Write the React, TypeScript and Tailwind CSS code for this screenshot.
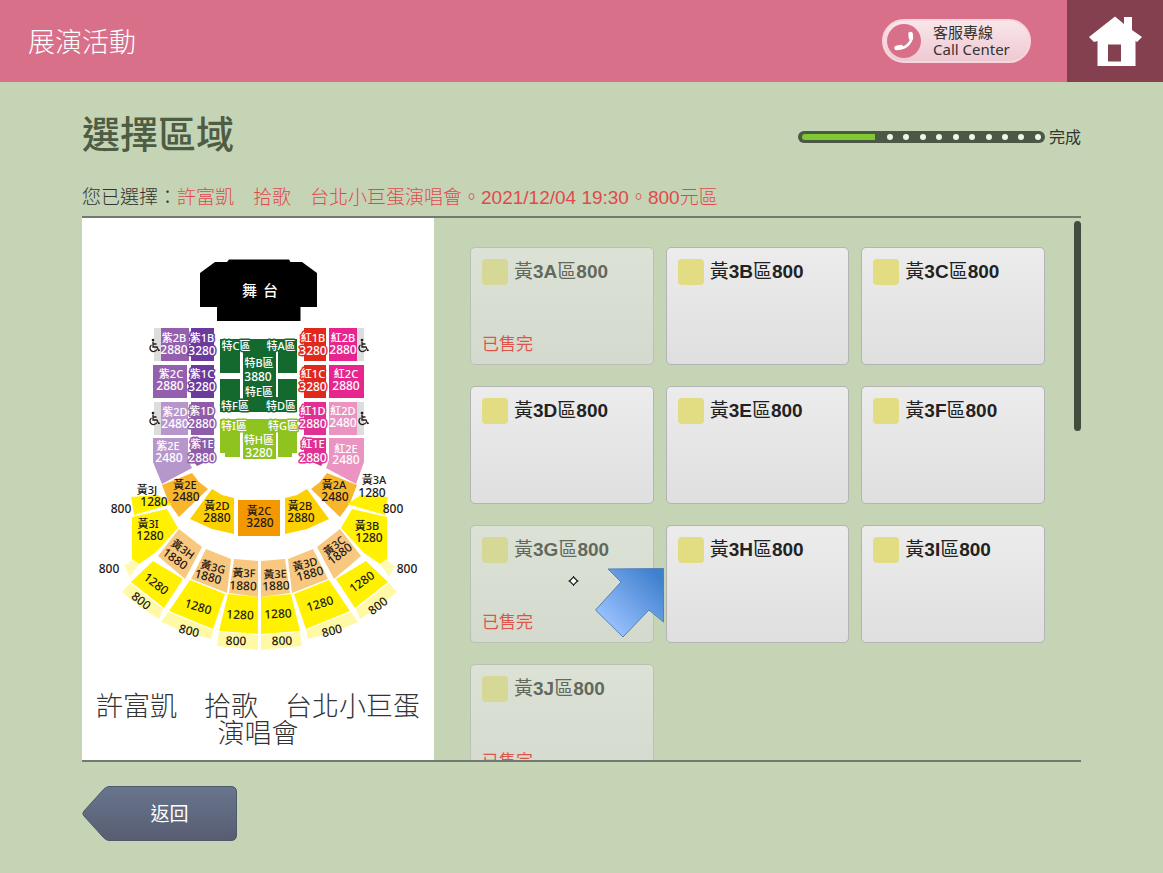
import { useState } from "react"
import clsx from "clsx"

type Area = { name: string; soldOut?: boolean }
type Block = { points: string; fill: string }
type Label = { text: string; x: number; y: number; rotate?: number; halo?: string; light?: boolean }

const areas: Area[] = [
  { name: "3A", soldOut: true },
  { name: "3B" },
  { name: "3C" },
  { name: "3D" },
  { name: "3E" },
  { name: "3F" },
  { name: "3G", soldOut: true },
  { name: "3H" },
  { name: "3I" },
  { name: "3J", soldOut: true },
]

// Left half of the lower bowl, the right half is the same shapes mirrored
const bowl: Block[] = [
  { points: "162,485 192,473 199,482 208,489 179,517 169,503", fill: "#f8b62d" },
  { points: "212,489 222,495 234,498 234,534 212,529 190,519", fill: "#fdd000" },
  { points: "131,497 158,495 172,504 134,515", fill: "#fff100" },
  { points: "132,517 167,509 178,528 155,553 139,564 132,559", fill: "#fff100" },
  { points: "124,566 132,560 139,564 130,577", fill: "#fff9b1" },
  { points: "179,529 202,547 185,579 158,556", fill: "#f8c880" },
  { points: "153,561 183,579 164,608 131,582", fill: "#fff100" },
  { points: "130,583 163,609 159,619 140,607 122,592", fill: "#fff9a5" },
  { points: "206,549 231,559 227,593 191,579", fill: "#f8c880" },
  { points: "190,580 225,594 213,629 169,611", fill: "#fff100" },
  { points: "168,612 213,630 211,639 185,632 161,622", fill: "#fff9a5" },
  { points: "234,559 258,561 258,597 229,593", fill: "#f8c880" },
  { points: "228,594 258,597 258,634 219,631", fill: "#fff100" },
  { points: "219,632 258,635 258,650 217,646", fill: "#fff9a5" },
]

const sideBlocks: Block[] = [
  { points: "154,328 161,328 161,361 154,361", fill: "#dcdddd" },
  { points: "161,328 189,328 189,361 161,361", fill: "#9460ae" },
  { points: "191,328 214,328 214,361 191,361", fill: "#6a3a9c" },
  { points: "153,365 187,365 187,398 153,398", fill: "#9460ae" },
  { points: "191,365 214,365 214,398 191,398", fill: "#6a3a9c" },
  { points: "154,402 161,402 161,435 154,435", fill: "#dcdddd" },
  { points: "161,402 188,402 188,435 161,435", fill: "#b797cb" },
  { points: "191,402 214,402 214,435 191,435", fill: "#8f5cab" },
  { points: "153,438 188,438 188,460 192,468 162,484 153,462", fill: "#b797cb" },
  { points: "191,438 214,438 214,458 197,466 191,458", fill: "#8f5cab" },
  { points: "304,328 326,328 326,361 304,361", fill: "#e0291c" },
  { points: "329,328 357,328 357,361 329,361", fill: "#e8258f" },
  { points: "357,328 364,328 364,361 357,361", fill: "#dcdddd" },
  { points: "304,365 326,365 326,398 304,398", fill: "#e0291c" },
  { points: "329,365 364,365 364,398 329,398", fill: "#e8258f" },
  { points: "304,402 326,402 326,435 304,435", fill: "#e03193" },
  { points: "329,402 357,402 357,435 329,435", fill: "#eb94c1" },
  { points: "357,402 364,402 364,435 357,435", fill: "#dcdddd" },
  { points: "304,438 326,438 326,458 321,466 304,458", fill: "#e03193" },
  { points: "329,438 364,438 364,462 356,484 326,468 329,460", fill: "#eb94c1" },
]

const sideLabels: Label[] = [
  { text: "紫2B", x: 174, y: 338, light: true },
  { text: "2880", x: 174, y: 350, light: true },
  { text: "紫1B", x: 202, y: 338, halo: "#6a3a9c" },
  { text: "3280", x: 202, y: 351, halo: "#6a3a9c" },
  { text: "紫2C", x: 171, y: 374, light: true },
  { text: "2880", x: 170, y: 386, light: true },
  { text: "紫1C", x: 202, y: 374, halo: "#6a3a9c" },
  { text: "3280", x: 202, y: 387, halo: "#6a3a9c" },
  { text: "紫2D", x: 175, y: 412, light: true },
  { text: "2480", x: 175, y: 424, light: true },
  { text: "紫1D", x: 202, y: 411, halo: "#8f5cab" },
  { text: "2880", x: 202, y: 424, halo: "#8f5cab" },
  { text: "紫2E", x: 168, y: 446, light: true },
  { text: "2480", x: 169, y: 458, light: true },
  { text: "紫1E", x: 202, y: 444, halo: "#8f5cab" },
  { text: "2880", x: 202, y: 458, halo: "#8f5cab" },
  { text: "紅1B", x: 313, y: 338, halo: "#e0291c" },
  { text: "3280", x: 313, y: 351, halo: "#e0291c" },
  { text: "紅2B", x: 343, y: 338, light: true },
  { text: "2880", x: 343, y: 350, light: true },
  { text: "紅1C", x: 313, y: 374, halo: "#e0291c" },
  { text: "3280", x: 313, y: 387, halo: "#e0291c" },
  { text: "紅2C", x: 346, y: 374, light: true },
  { text: "2880", x: 346, y: 386, light: true },
  { text: "紅1D", x: 313, y: 411, halo: "#e03193" },
  { text: "2880", x: 313, y: 424, halo: "#e03193" },
  { text: "紅2D", x: 343, y: 411, light: true },
  { text: "2480", x: 343, y: 423, light: true },
  { text: "紅1E", x: 313, y: 444, halo: "#e03193" },
  { text: "2880", x: 313, y: 458, halo: "#e03193" },
  { text: "紅2E", x: 346, y: 449, light: true },
  { text: "2480", x: 346, y: 460, light: true },
  { text: "特C區", x: 236, y: 346, halo: "#14692f" },
  { text: "特A區", x: 281, y: 346, halo: "#14692f" },
  { text: "特B區", x: 259, y: 363, halo: "#14692f" },
  { text: "3880", x: 258, y: 377, halo: "#14692f" },
  { text: "特E區", x: 259, y: 392, halo: "#14692f" },
  { text: "特F區", x: 235, y: 406, halo: "#14692f" },
  { text: "特D區", x: 281, y: 406, halo: "#14692f" },
  { text: "特I區", x: 234, y: 426, halo: "#8fc31f" },
  { text: "特G區", x: 283, y: 426, halo: "#8fc31f" },
  { text: "特H區", x: 259, y: 440, halo: "#8fc31f" },
  { text: "3280", x: 259, y: 453, halo: "#8fc31f" },
]

const bowlLabels: Label[] = [
  { text: "黃3J", x: 147, y: 490 },
  { text: "1280", x: 154, y: 502 },
  { text: "800", x: 121, y: 509 },
  { text: "黃3I", x: 148, y: 524 },
  { text: "1280", x: 150, y: 536 },
  { text: "800", x: 109, y: 569 },
  { text: "黃2E", x: 185, y: 485 },
  { text: "2480", x: 186, y: 497 },
  { text: "黃2D", x: 217, y: 506 },
  { text: "2880", x: 217, y: 518 },
  { text: "黃2C", x: 259, y: 511 },
  { text: "3280", x: 260, y: 523 },
  { text: "黃2B", x: 300, y: 506 },
  { text: "2880", x: 301, y: 518 },
  { text: "黃2A", x: 334, y: 485 },
  { text: "2480", x: 335, y: 497 },
  { text: "黃3A", x: 374, y: 480 },
  { text: "1280", x: 372, y: 493 },
  { text: "800", x: 393, y: 509 },
  { text: "黃3B", x: 367, y: 526 },
  { text: "1280", x: 369, y: 538 },
  { text: "800", x: 407, y: 569 },
  { text: "黃3H", x: 183, y: 549, rotate: 36 },
  { text: "1880", x: 175, y: 559, rotate: 36 },
  { text: "1280", x: 156, y: 584, rotate: 38 },
  { text: "800", x: 141, y: 601, rotate: 38 },
  { text: "黃3G", x: 213, y: 567, rotate: 15 },
  { text: "1880", x: 208, y: 577, rotate: 15 },
  { text: "1280", x: 198, y: 607, rotate: 17 },
  { text: "800", x: 189, y: 631, rotate: 15 },
  { text: "黃3F", x: 244, y: 573, rotate: 2 },
  { text: "1880", x: 243, y: 586, rotate: 3 },
  { text: "1280", x: 240, y: 615, rotate: 3 },
  { text: "800", x: 236, y: 641, rotate: 2 },
  { text: "黃3E", x: 275, y: 574, rotate: -2 },
  { text: "1880", x: 276, y: 586, rotate: -3 },
  { text: "1280", x: 278, y: 614, rotate: -3 },
  { text: "800", x: 282, y: 641, rotate: -2 },
  { text: "黃3D", x: 305, y: 564, rotate: -15 },
  { text: "1880", x: 310, y: 574, rotate: -15 },
  { text: "1280", x: 320, y: 604, rotate: -17 },
  { text: "800", x: 332, y: 631, rotate: -15 },
  { text: "黃3C", x: 334, y: 546, rotate: -38 },
  { text: "1880", x: 340, y: 554, rotate: -38 },
  { text: "1280", x: 362, y: 582, rotate: -36 },
  { text: "800", x: 378, y: 606, rotate: -38 },
]

function MapLabel({ text, x, y, rotate = 0, halo, light }: Label) {
  return (
    <text
      x={x}
      y={y + 4}
      transform={`rotate(${rotate} ${x} ${y})`}
      textAnchor="middle"
      fontSize={/^\d/.test(text) ? 12 : 11}
      fontWeight={500}
      fill={halo || light ? "#fff" : "#231815"}
      stroke={halo ?? "none"}
      strokeWidth={halo ? 3 : 0}
      strokeLinejoin="round"
      paintOrder="stroke"
    >
      {text}
    </text>
  )
}

function Wheelchair({ x, y }: { x: number; y: number }) {
  return (
    <g transform={`translate(${x} ${y})`} fill="none" stroke="#231815" strokeWidth="1.3">
      <circle cx="-1" cy="-6" r="1.3" fill="#231815" stroke="none" />
      <path d="M-1 -4.500V1H3L4.500 4.500L6 4M-1 -2H2.500" />
      <path d="M-2.500 -1A3.600 3.600 0 1 0 2.800 3.500" />
    </g>
  )
}

function SeatMap() {
  return (
    <svg
      viewBox="82 218 352 460"
      className="block w-full font-['Noto_Sans','Noto_Sans_CJK_TC',sans-serif]"
      role="img"
      aria-label="座位圖"
    >
      <path d="M200 273L215 262H227L229 259.500H289L290.500 262H302L317 273V307H300.500V321H217V307H200Z" fill="#000" />
      <text x="242" y="296" fontSize="15" fontWeight="500" fill="#fff">舞</text>
      <text x="263" y="296" fontSize="15" fontWeight="500" fill="#fff">台</text>

      {sideBlocks.map(b => <polygon key={b.points} points={b.points} fill={b.fill} />)}

      <path
        d="M220 339H297V373H278V351H276V397H278V379H297V412H220V379H240V403H243V351H240V373H220Z"
        fill="#14692f"
      />
      <path d="M220 419H297V453H292V457H278V432H276V459H243V432H240V457H225V453H220Z" fill="#8fc31f" />

      {bowl.map(b => <polygon key={b.points} points={b.points} fill={b.fill} />)}
      <g transform="translate(519 0) scale(-1 1)">
        {bowl.map(b => <polygon key={b.points} points={b.points} fill={b.fill} />)}
      </g>
      <rect x="238" y="500" width="42" height="36" fill="#f39800" />

      <Wheelchair x={154} y={346} />
      <Wheelchair x={363} y={346} />
      <Wheelchair x={154} y={419} />
      <Wheelchair x={363} y={419} />

      {[...sideLabels, ...bowlLabels].map(l => <MapLabel key={`${l.x}-${l.y}`} {...l} />)}
    </svg>
  )
}

function Pointer() {
  return (
    <svg viewBox="562 564 106 78" className="pointer-events-none absolute top-[39px] left-[92px] w-[106px]">
      <defs>
        <linearGradient id="pointer" x1="0" y1="1" x2="1" y2="0">
          <stop offset="0.15" stopColor="#9cc3ff" />
          <stop offset="0.9" stopColor="#4081cf" />
        </linearGradient>
      </defs>
      <path
        d="M608 569L663.500 568.500V622L649 610L623 637L595.500 610L621 582Z"
        fill="url(#pointer)"
        stroke="#5580b8"
        strokeLinejoin="round"
      />
      <path d="M573.500 577L577.500 581L573.500 585L569.500 581Z" fill="#fff" stroke="#222" strokeWidth="1.200" />
      <path d="M573.500 576V578M573.500 584V586M568.500 581H570.500M576.500 581H578.500" stroke="#222" />
    </svg>
  )
}

function AreaCard({ area, selected, onSelect }: { area: Area; selected: boolean; onSelect: () => void }) {
  return (
    <button
      type="button"
      disabled={area.soldOut}
      aria-pressed={selected}
      onClick={onSelect}
      className={clsx(
        "flex h-[118px] w-full flex-col justify-between rounded-[5px] border border-[#b4b4b4] bg-linear-to-b from-[#ececec] to-[#dfdfdf] p-[11px] pb-[7px] text-left",
        area.soldOut && "opacity-60"
      )}
    >
      <span className="flex items-center gap-[6px]">
        <span className="size-[26px] rounded-sm bg-[#e2dc82]" />
        <span className="text-[19px] leading-6 font-bold text-[#222]">
          <span className="font-normal">黃</span>{area.name}<span className="font-normal">區</span>800
        </span>
      </span>
      {area.soldOut && <span className="text-[17px] leading-6 text-[#f00000]">已售完</span>}
    </button>
  )
}

export default function App() {
  const [selected, setSelected] = useState("")

  return (
    <div className="flex h-screen flex-col bg-[#c4d4b5] font-['Liberation_Sans','Noto_Sans_CJK_TC',sans-serif] text-[#333]">
      <header className="flex h-[82px] shrink-0 items-center bg-[#d9708a]">
        <p className="flex-1 pt-1 pl-7 text-[27px] font-light text-white">展演活動</p>
        <button
          type="button"
          className="mr-9 flex h-11 w-[149px] items-center gap-3 rounded-full border-2 border-[#f6d5dd] bg-linear-to-b from-[#f9e6ea] to-[#efc9d3] pl-[3px] text-left"
        >
          <svg viewBox="0 0 34 34" className="size-[34px]">
            <circle cx="17" cy="17" r="17" fill="#d9708a" />
            <path
              d="M24.500 10C26 17 20 25 10 24.500"
              fill="none"
              stroke="#fff"
              strokeWidth="2.600"
              strokeLinecap="round"
            />
            <path d="M23.500 10L24 14M9.500 24L14 23" stroke="#fff" strokeWidth="4.500" strokeLinecap="round" />
          </svg>
          <span className="flex flex-col text-[15px] leading-[17px]">
            <span>客服專線</span>
            <span className="font-['Noto_Sans',sans-serif]">Call Center</span>
          </span>
        </button>
        <a href="#" aria-label="首頁" className="flex h-full w-24 items-center justify-center bg-[#84404f]">
          <svg viewBox="0 0 54 50" className="w-[54px]">
            <path
              d="M27 0.500L36 8V1H44V14L54 21L49 26L47.500 25V50H9.500V25L6 26L1 21ZM20 28.500V45.500H33V28.500Z"
              fill="#fff"
              fillRule="evenodd"
            />
          </svg>
        </a>
      </header>

      <main className="flex min-h-0 flex-1 flex-col px-[82px] pt-7 pb-8">
        <div className="flex items-center justify-between">
          <h1 className="text-[38px] leading-[50px] font-medium text-[#4d5c42]">選擇區域</h1>
          <div className="flex items-center gap-1 pt-1">
            <div className="flex h-3 w-[247px] items-center rounded-full bg-[#4a5844] px-1">
              <div className="h-[6px] w-[73px] rounded-l-full bg-[#7fc832]" />
              <div className="flex flex-1 justify-between pl-3">
                {Array.from({ length: 10 }, (_, i) => (
                  <span key={i} className="size-[6px] rounded-full bg-[#f0f5ea]" />
                ))}
              </div>
            </div>
            <span className="pt-[2px] text-[16px] leading-5">完成</span>
          </div>
        </div>

        <p className="mt-[26px] text-[19px] leading-6 font-light">
          您已選擇：<span className="text-[#e04a4e]">許富凱　拾歌　台北小巨蛋演唱會。2021/12/04 19:30。800元區</span>
        </p>

        <div className="mt-[6px] flex min-h-0 flex-1 border-y-2 border-[#73796f]">
          <section className="w-[352px] shrink-0 overflow-hidden bg-white">
            <SeatMap />
            <p className="mt-4 px-3 text-center text-[27px] leading-[27px] font-light">
              許富凱　拾歌　台北小巨蛋演唱會
            </p>
          </section>

          <ul className="grid flex-1 auto-rows-max grid-cols-3 gap-x-3 gap-y-[21px] overflow-hidden pt-[29px] pr-[29px] pl-9">
            {areas.map(area => (
              <li key={area.name} className="relative">
                <AreaCard
                  area={area}
                  selected={selected === area.name}
                  onSelect={() => setSelected(area.name)}
                />
                {area.name === "3G" && <Pointer />}
              </li>
            ))}
          </ul>
          <div className="mt-[3px] h-[210px] w-[7px] rounded-full bg-[#414d3d]" />
        </div>

        <button type="button" className="relative mt-6 h-[55px] w-[155px] shrink-0 pt-1 pl-5 text-[19px] text-white">
          <svg viewBox="0 0 155 55" className="absolute inset-0 size-full">
            <defs>
              <linearGradient id="back" x1="0" y1="0" x2="0" y2="1">
                <stop offset="0" stopColor="#68758c" />
                <stop offset="1" stopColor="#585d71" />
              </linearGradient>
            </defs>
            <path
              d="M27 0.500H149Q154.500 0.500 154.500 6V49Q154.500 54.500 149 54.500H27Q24 54.500 21 51L2 30Q-0.500 27.500 2 25L21 4Q24 0.500 27 0.500Z"
              fill="url(#back)"
              stroke="#50586b"
            />
          </svg>
          <span className="relative">返回</span>
        </button>
      </main>
    </div>
  )
}
